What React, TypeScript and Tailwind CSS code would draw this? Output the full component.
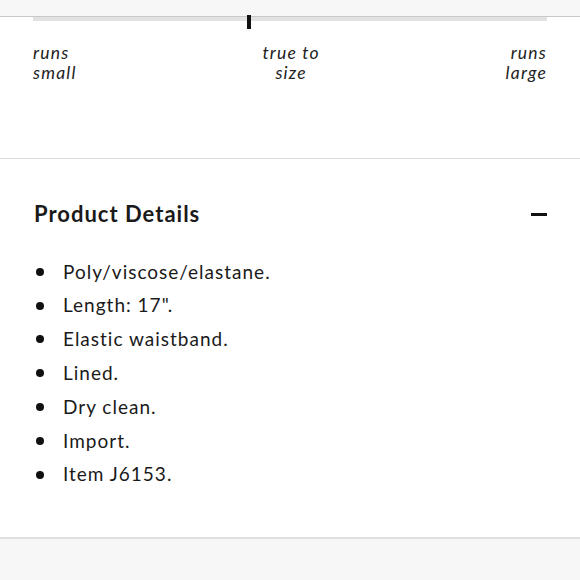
import React from "react";

const items = [
  "Poly/viscose/elastane.",
  "Length: 17\".",
  "Elastic waistband.",
  "Lined.",
  "Dry clean.",
  "Import.",
  "Item J6153.",
];

export default function App() {
  return (
    <div className="w-[580px] h-[580px] overflow-hidden bg-white text-[#1a1a1a]" style={{ fontFamily: "Lato, 'Open Sans', sans-serif" }}>
      <div className="h-[17px] bg-[#f7f7f7] border-b border-[#c8c8c8]" />
      <div className="px-[33px]">
        <div className="relative h-[4px] bg-[#e2e2e2]">
          <div className="absolute left-[214px] top-[-2px] w-[4px] h-[14px] bg-[#111]" />
        </div>
        <div className="mt-[22px] flex justify-between italic text-[17.5px] leading-[20px] text-[#222] tracking-[1.2px]">
          <div className="text-left">runs<br />small</div>
          <div className="text-center">true to<br />size</div>
          <div className="text-right">runs<br />large</div>
        </div>
      </div>
      <div className="mt-[75px] border-t border-[#dcdcdc]" />
      <div className="px-[33px] pt-[41px]">
        <div className="flex items-center justify-between h-[28px]">
          <div className="text-[22px] font-bold leading-[28px] tracking-[1px] ml-[1px]">Product Details</div>
          <div className="w-[16px] h-[3px] bg-[#111]" />
        </div>
        <ul className="mt-[27px]">
          {items.map((t) => (
            <li key={t} className="flex items-center h-[33.8px] text-[19px] tracking-[1px]">
              <span className="w-[8px] h-[8px] rounded-full bg-[#111] ml-[3px] mr-[19px]" />
              <span>{t}</span>
            </li>
          ))}
        </ul>
      </div>
      <div className="mt-[45px] border-t-2 border-[#e0e0e0] bg-[#f7f7f7] h-[60px]" />
    </div>
  );
}
